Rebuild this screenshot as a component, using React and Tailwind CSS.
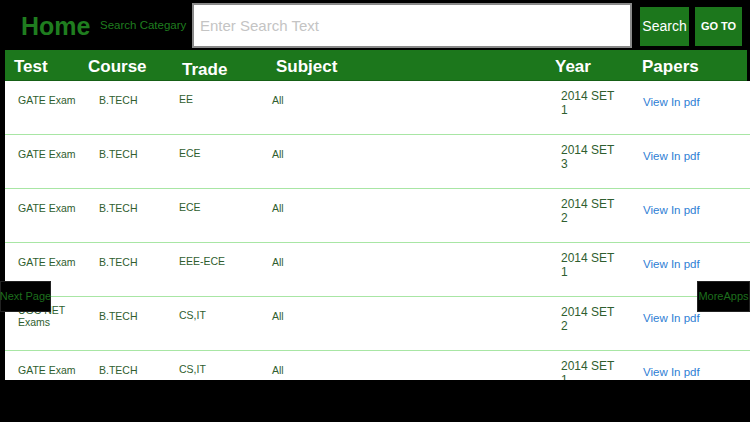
const rows = [
  { test: 'GATE Exam', course: 'B.TECH', trade: 'EE', subject: 'All', year: '2014 SET 1' },
  { test: 'GATE Exam', course: 'B.TECH', trade: 'ECE', subject: 'All', year: '2014 SET 3' },
  { test: 'GATE Exam', course: 'B.TECH', trade: 'ECE', subject: 'All', year: '2014 SET 2' },
  { test: 'GATE Exam', course: 'B.TECH', trade: 'EEE-ECE', subject: 'All', year: '2014 SET 1' },
  { test: 'UGC NET Exams', course: 'B.TECH', trade: 'CS,IT', subject: 'All', year: '2014 SET 2' },
  { test: 'GATE Exam', course: 'B.TECH', trade: 'CS,IT', subject: 'All', year: '2014 SET 1' },
]

export default function App() {
  return (
    <div
      className="relative w-[750px] h-[422px] bg-black overflow-hidden flex flex-col"
      style={{ fontFamily: '"Liberation Sans", Arial, sans-serif' }}
    >
      {/* top bar */}
      <div className="h-[50px] flex items-center shrink-0">
        <div className="pl-[21px] w-[100px] text-[25px] font-bold text-[#1f7d1f] leading-none pt-[2px]">Home</div>
        <div className="w-[92px] text-[11.5px] text-[#1f7d1f] pt-[2px] whitespace-nowrap">Search Categary</div>
        <input
          className="w-[440px] h-[45px] bg-white border-2 border-[#8a8a8a] px-[6px] text-[15px] text-gray-700 placeholder-[#c4c4c4] outline-none"
          placeholder="Enter Search Text"
        />
        <button className="ml-[8px] w-[49px] h-[39px] bg-[#1c771c] text-white text-[14px] mt-[3px]">Search</button>
        <button className="ml-[6px] w-[47px] h-[39px] bg-[#1c771c] text-white text-[11px] font-bold mt-[3px]">GO TO</button>
      </div>

      {/* table */}
      <div className="ml-[5px] flex flex-col">
        <div className="mr-[3px] h-[31px] bg-[#1c771c] border-b border-[#166016] flex text-white text-[17px] font-bold">
          <div className="w-[83px] pl-[9px] pt-[4px]">Test</div>
          <div className="w-[94px] pt-[4px]">Course</div>
          <div className="w-[94px] pt-[7px]">Trade</div>
          <div className="w-[279px] pt-[4px]">Subject</div>
          <div className="w-[87px] pt-[4px]">Year</div>
          <div className="pt-[4px]">Papers</div>
        </div>
        <div className="h-[299px] bg-white overflow-hidden">
          {rows.map((r, i) => (
            <div key={i} className="h-[54px] border-b border-[#a8e6a4] flex items-start text-[#2f5e2f] text-[10.5px]">
              <div className="w-[94px] pl-[13px] h-[37px] flex items-center leading-[12px]">
                <span className="w-[62px]">{r.test}</span>
              </div>
              <div className="w-[80px] h-[39px] flex items-center">{r.course}</div>
              <div className="w-[93px] h-[37px] flex items-center">{r.trade}</div>
              <div className="w-[289px] h-[39px] flex items-center">{r.subject}</div>
              <div className="w-[82px] h-[44px] flex items-center text-[12px] leading-[14px]">
                <span className="w-[58px]">{r.year}</span>
              </div>
              <div className="h-[44px] flex items-center text-[11.5px] text-[#2f80d4]">View In pdf</div>
            </div>
          ))}
        </div>
      </div>

      {/* overlay buttons */}
      <button className="absolute left-0 top-[281px] w-[51px] h-[31px] bg-black border border-[#222] text-[11px] text-[#1d6e1d] leading-none whitespace-nowrap overflow-visible flex items-center justify-center">
        Next Page
      </button>
      <button className="absolute right-0 top-[281px] w-[53px] h-[31px] bg-black border border-[#222] text-[11px] text-[#1d6e1d] leading-none whitespace-nowrap flex items-center justify-center">
        MoreApps
      </button>
    </div>
  )
}
